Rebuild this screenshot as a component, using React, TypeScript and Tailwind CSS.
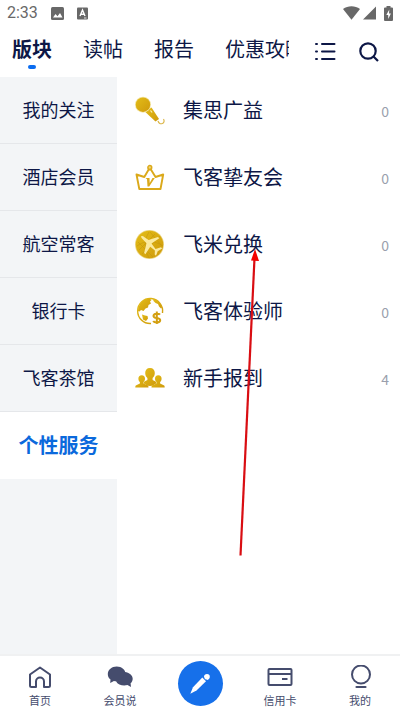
import React from 'react';

type IconProps = { className?: string };

const GoldFill: React.FC<{ id: string }> = ({ id }) => (
  <defs>
    <linearGradient id={id} x1="0" y1="0" x2="1" y2="1">
      <stop offset="0" stopColor="#e3bd18" />
      <stop offset="1" stopColor="#cf9a0c" />
    </linearGradient>
  </defs>
);

const MicIcon: React.FC = () => (
  <svg viewBox="0 0 30 30" className="size-[30px]" aria-hidden="true">
    <GoldFill id="mic" />
    <path d="M10 15.800 16.500 11.500 24 23 20.500 25.500Z" fill="url(#mic)" />
    <circle cx="8" cy="8.700" r="8" fill="#f4e6a4" />
    <circle cx="8" cy="8.700" r="7.200" fill="url(#mic)" />
    <path d="M15.500 14.500l1.600 2" stroke="#fff3b8" strokeWidth="1.200" />
    <path d="M23 25c.8 2.500 2.500 3.200 4.300 2.500 2-.8 2.200-3 1.200-4.500" fill="none" stroke="#dbb64a" strokeWidth="1.200" />
  </svg>
);

const CrownIcon: React.FC = () => (
  <svg viewBox="0 0 30 30" className="size-[30px]" fill="none" stroke="#dba91a" aria-hidden="true">
    <path d="M4.300 26 1.500 11.500 9.300 14 13.700 6.500h2.200L20.500 14l7.700-2.500L25.500 26Z" strokeWidth="1.900" strokeLinejoin="round" />
    <circle cx="14.800" cy="4.500" r="1.900" fill="#f0d67a" strokeWidth="1.500" />
    <path d="M10.500 15h4l.2 5 2.800-5h2.300l-5.600 8.500h-1.700l-.5-7.300Z" fill="#dba91a" stroke="none" />
  </svg>
);

const PlaneIcon: React.FC = () => (
  <svg viewBox="0 0 30 30" className="size-[30px]" aria-hidden="true">
    <GoldFill id="coin" />
    <circle cx="14.500" cy="14.500" r="14.500" fill="#ecd78a" />
    <circle cx="14.500" cy="14.500" r="13.700" fill="url(#coin)" />
    <path d="M4 20 20 4M7 24 25 6M3 12l15 15M15 2l12 14M2 16c8-6 17-6 26 0M14 2c-5 8-5 17 0 26" fill="none" stroke="#c0940f" strokeWidth=".5" />
    <path d="M6.400 6.100c.8-.5 2 0 2.800.8l4.300 3 9.500-3 1.300 1.300-7.800 5.200 4 5.500 5.500-1.600 1.200 1.200-4.500 2.800-1.700 4.500-1.300-1.200.2-4-4.700-3.800-4.800 7.500-1.300-1.300 2.400-9.800-4.500-4.600c-.8-1-1.200-2-.6-2.500Z" fill="#fbeaa0" />
  </svg>
);

const GlobeIcon: React.FC = () => (
  <svg viewBox="0 0 30 30" className="size-[30px]" aria-hidden="true">
    <GoldFill id="globe" />
    <path d="M16 26.500A12.500 12.500 0 1 1 27.500 16" fill="none" stroke="url(#globe)" strokeWidth="1.400" />
    <path d="M3 14C3.500 7 8 2 14.500 1.500l2 1.500-1.500 1.500 1 2-2.500 1.500-.5 2.500-2.500 1-2 2.500-2.500-1-1.500 1.500Z" fill="url(#globe)" />
    <path d="M18 2c4.500 1 8 4.400 9 8.500l-1 1-2-2-1-2.500-2.500-1-2-2Z" fill="url(#globe)" />
    <path d="M7 17.500l3 1 2.500.5.500 2.500-2 2.500-3-1.500Z" fill="url(#globe)" />
    <path d="M25 17.700c-1-1.400-6.500-1.600-6.500 1.200 0 3 6.700 1.400 6.700 4.400 0 3-6 2.500-7 .7M21.800 14.500v12.500" fill="none" stroke="#d39f10" strokeWidth="2" />
  </svg>
);

const PeopleIcon: React.FC = () => (
  <svg viewBox="0 0 30 30" className="size-[30px]" fill="url(#people)" aria-hidden="true">
    <GoldFill id="people" />
    <path d="M15 4c3.200 0 4.800 2 4.800 5 0 2.300-.9 3.800-2.200 5v2l3 1.500 1 1.800c-2 .8-3.400 2.700-6.600 2.700s-4.600-1.900-6.600-2.700l1-1.800 3-1.500v-2c-1.300-1.200-2.200-2.700-2.200-5 0-3 1.600-5 4.800-5Z" />
    <path d="M6.700 11.300c2.200 0 3.300 1.500 3.300 3.400 0 1.600-.7 2.600-1.500 3.400v1.500l4 1.600c.9.400 1 1.200 1 2.300H.3c0-1.100.1-1.900 1-2.300l3.600-1.600v-1.500c-.8-.8-1.500-1.800-1.500-3.400 0-1.900 1.100-3.400 3.300-3.400Z" />
    <path d="M23.300 11.300c2.200 0 3.300 1.500 3.300 3.400 0 1.600-.7 2.600-1.500 3.400v1.500l3.600 1.600c.9.400 1 1.200 1 2.300H16.500c0-1.100.1-1.900 1-2.300l4-1.600v-1.500c-.8-.8-1.500-1.800-1.500-3.400 0-1.900 1.100-3.400 3.300-3.400Z" />
  </svg>
);

const HomeIcon: React.FC<IconProps> = ({ className }) => (
  <svg viewBox="0 0 26 26" className={className} fill="none" stroke="currentColor" strokeWidth="2" strokeLinejoin="round" aria-hidden="true">
    <path d="M3 9.500 13 2.500l10 7V20.500a1.500 1.500 0 0 1-1.500 1.500H17v-5.500a4 4 0 0 0-8 0V22H4.500A1.500 1.500 0 0 1 3 20.500Z" />
  </svg>
);

const ChatIcon: React.FC<IconProps> = ({ className }) => (
  <svg viewBox="0 0 26 26" className={className} fill="currentColor" aria-hidden="true">
    <path d="M9.700 1.500C4.700 1.500.8 4.700.8 9c0 2.300 1 4.200 2.700 5.600L3.200 18.100l3.700-2.100c1 .3 1.900.4 2.800.4 5 0 8.900-3.200 8.900-7.400S14.700 1.500 9.700 1.500Z" />
    <path d="M17.800 7c0 5-3.500 8.900-8.800 9.300 1.500 2.900 4.700 4.200 8.300 4.200 1.100 0 2.200-.2 3.200-.5l3.500 1.900-.4-3.600c1.300-1.200 2.100-2.800 2.100-4.600 0-3.400-3.500-6.200-7.900-6.700Z" />
  </svg>
);

const CardIcon: React.FC<IconProps> = ({ className }) => (
  <svg viewBox="0 0 26 26" className={className} fill="none" stroke="currentColor" strokeWidth="2" aria-hidden="true">
    <rect x="1.500" y="4" width="23" height="16" rx="1" />
    <path d="M2 9h22M15 14H20.500" />
  </svg>
);

const UserIcon: React.FC<IconProps> = ({ className }) => (
  <svg viewBox="0 0 26 26" className={className} fill="none" stroke="currentColor" strokeWidth="2" aria-hidden="true">
    <circle cx="14" cy="9.500" r="9" />
    <path d="M9.500 22h9" strokeWidth="2.200" strokeLinecap="round" />
  </svg>
);

const tabs = ['版块', '读帖', '报告', '优惠攻略'];

const categories = ['我的关注', '酒店会员', '航空常客', '银行卡', '飞客茶馆', '个性服务'];

const boards = [
  { name: '集思广益', count: 0, icon: MicIcon },
  { name: '飞客挚友会', count: 0, icon: CrownIcon },
  { name: '飞米兑换', count: 0, icon: PlaneIcon },
  { name: '飞客体验师', count: 0, icon: GlobeIcon },
  { name: '新手报到', count: 4, icon: PeopleIcon },
];

const StatusBar: React.FC = () => (
  <div className="flex h-[26px] items-center justify-between px-[7px] text-[#686868]">
    <div className="flex items-center">
      <span className="w-[44px] text-[16px] leading-[26px]">2:33</span>
      <svg viewBox="0 0 13 13" className="size-[13px]" aria-hidden="true">
        <rect width="13" height="13" rx="1.500" fill="currentColor" />
        <path d="M2 10.500 4.500 7l2 2.200L9 6l2.500 4.500Z" fill="#fff" />
      </svg>
      <svg viewBox="0 0 12 13" className="ml-[13px] h-[13px] w-[12px]" aria-hidden="true">
        <rect y=".5" width="11" height="12" rx="1" fill="currentColor" />
        <path d="M3 9 5.500 3 8 9M3.800 7.300h3.400" fill="none" stroke="#fff" strokeWidth="1.400" />
        <path d="M7 11h2.500" stroke="#fff" strokeWidth=".8" />
      </svg>
    </div>
    <div className="flex items-center">
      <svg viewBox="0 0 17 14" className="h-[14px] w-[17px]" fill="currentColor" aria-hidden="true">
        <path d="M0 3C5-.7 12-.7 17 3L8.500 13.800Z" />
      </svg>
      <svg viewBox="0 0 13 14" className="ml-[3px] h-[14px] w-[13px]" fill="currentColor" aria-hidden="true">
        <path d="M13 .5V13.500H0Z" />
      </svg>
      <svg viewBox="0 0 9 15" className="ml-2 h-[15px] w-[9px]" aria-hidden="true">
        <path d="M2.500 0h4v1.500H8A1 1 0 0 1 9 2.500V14a1 1 0 0 1-1 1H1a1 1 0 0 1-1-1V2.500a1 1 0 0 1 1-1h1.500Z" fill="currentColor" />
        <path d="M5.300 3.500 2.300 9h1.900v4L6.900 7.500H5Z" fill="#fff" />
      </svg>
    </div>
  </div>
);

const TopTabs: React.FC = () => (
  <header className="flex h-[51px] text-[#0d1746]">
    <nav className="flex min-w-0 flex-1 gap-[31px] overflow-hidden pl-3">
      {tabs.map((tab, i) => (
        <button key={tab} className="flex shrink-0 flex-col items-center pt-[9px]">
          <span className={i === 0 ? 'text-[20px] leading-[30px] font-bold' : 'text-[20px] leading-[30px]'}>{tab}</span>
          {i === 0 && <span className="h-1 w-2 rounded-full bg-[#0a6cf0]" />}
        </button>
      ))}
    </nav>
    <div className="flex items-center gap-[22px] pl-[25px] pr-5">
      <button aria-label="列表">
        <svg viewBox="0 0 22 20" className="h-5 w-[22px]" fill="none" stroke="currentColor" strokeWidth="2" strokeLinecap="round" aria-hidden="true">
          <path d="M2 2h1M8 2H20.500M2 9.500h1M8 9.500H20.500M2 17h1M8 17H20.500" />
        </svg>
      </button>
      <button aria-label="搜索">
        <svg viewBox="0 0 22 20" className="h-5 w-[22px]" fill="none" stroke="currentColor" strokeWidth="2.200" aria-hidden="true">
          <circle cx="10" cy="9" r="7.700" />
          <path d="M15.500 14.500 20 19" />
        </svg>
      </button>
    </div>
  </header>
);

const Sidebar: React.FC = () => (
  <aside className="w-[117px] shrink-0 bg-[#f3f5f7]">
    {categories.map((name) =>
      name === '个性服务' ? (
        <button key={name} className="block h-[67px] w-full bg-white text-[20px] font-bold text-[#0b69dc]">
          {name}
        </button>
      ) : (
        <button key={name} className="block h-[67px] w-full border-b border-[#e5e7ea] text-[18px] text-[#0d1746]">
          {name}
        </button>
      )
    )}
  </aside>
);

const BoardList: React.FC = () => (
  <ul className="min-w-0 flex-1">
    {boards.map(({ name, count, icon: Icon }) => (
      <li key={name}>
        <a href="#" className="flex h-[67px] items-center pl-[18px] pr-[11px]">
          <Icon />
          <span className="ml-[18px] flex-1 text-[20px] text-[#0d1746]">{name}</span>
          <span className="font-['Noto_Sans_CJK_SC',sans-serif] text-[14px] leading-[20px] text-[#9a9fad]">{count}</span>
        </a>
      </li>
    ))}
  </ul>
);

const navItem = 'flex flex-1 flex-col items-center gap-[3px] pt-[9px] text-[11px] leading-[16px] text-[#454c6d]';

const BottomNav: React.FC = () => (
  <nav className="flex h-[57px] border-t-2 border-[#f0f1f2] bg-white">
    <a href="#" className={navItem}>
      <HomeIcon className="size-[26px]" />
      首页
    </a>
    <a href="#" className={navItem}>
      <ChatIcon className="size-[26px]" />
      会员说
    </a>
    <div className="flex flex-1 items-center justify-center">
      <button aria-label="发帖" className="flex size-[45px] items-center justify-center rounded-full bg-[#1670ea] text-white">
        <svg viewBox="0 0 24 24" className="size-6" fill="currentColor" aria-hidden="true">
          <path d="M14.300 5.500 18 9.200 8.500 18.500 2.300 21.700 5 15.200Z" />
          <circle cx="19" cy="4.800" r="2.800" />
          <path d="M15.800 4.200 17.500 3l3.300 3.500-1.300 1.500Z" />
        </svg>
      </button>
    </div>
    <a href="#" className={navItem}>
      <CardIcon className="size-[26px]" />
      信用卡
    </a>
    <a href="#" className={navItem}>
      <UserIcon className="size-[26px]" />
      我的
    </a>
  </nav>
);

const App: React.FC = () => {
  return (
    <div className="relative flex min-h-screen flex-col bg-white font-[Roboto,'Noto_Sans_CJK_SC',sans-serif]">
      <StatusBar />
      <TopTabs />
      <main className="flex flex-1">
        <Sidebar />
        <BoardList />
      </main>
      <BottomNav />

      {/* red pointer drawn over the list */}
      <svg viewBox="0 0 24 310" className="pointer-events-none absolute left-[237px] top-[248px] h-[310px] w-6" aria-hidden="true">
        <path d="M3.500 307.500 17.500 10" stroke="#d90d12" strokeWidth="2.200" />
        <path d="M18 1 22 13 14 12.600Z" fill="#f20000" />
      </svg>
    </div>
  );
};

export default App;
